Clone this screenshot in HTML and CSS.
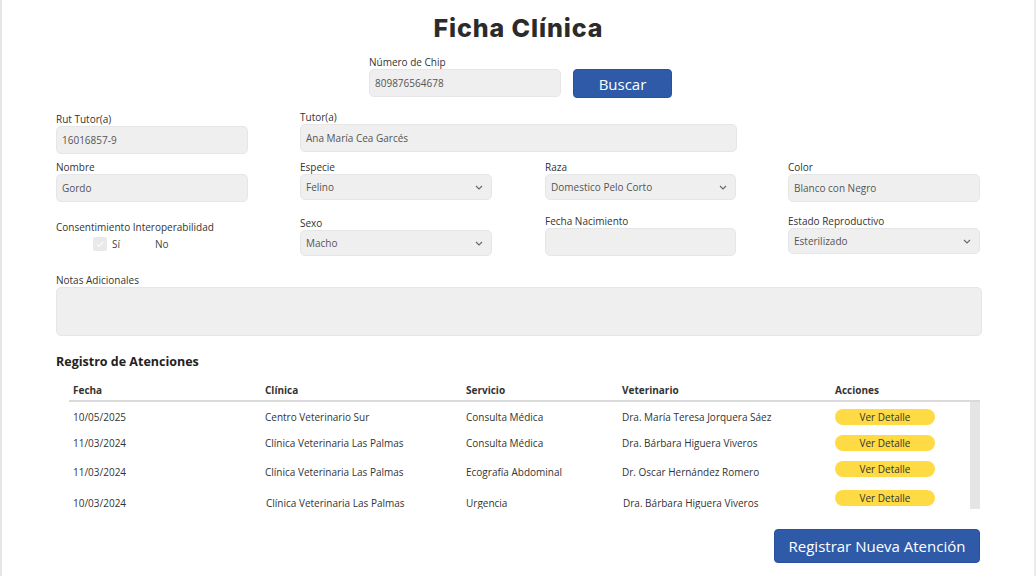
FILE: index.html
```html
<!DOCTYPE html>
<html lang="es">
<head>
<meta charset="utf-8">
<title>Ficha Clínica</title>
<link rel="stylesheet" href="styles.css">
</head>
<body>
<div class="page">
  <h1 class="title">Ficha Clínica</h1>

  <div class="chip-row">
    <div class="field chip-field">
      <div class="label">Número de Chip</div>
      <div class="input">809876564678</div>
    </div>
    <button class="btn-primary btn-buscar">Buscar</button>
  </div>

  <div class="grid row1">
    <div class="field">
      <div class="label">Rut Tutor(a)</div>
      <div class="input">16016857-9</div>
    </div>
    <div class="field span2 up2">
      <div class="label">Tutor(a)</div>
      <div class="input">Ana María Cea Garcés</div>
    </div>
  </div>

  <div class="grid row2">
    <div class="field">
      <div class="label">Nombre</div>
      <div class="input">Gordo</div>
    </div>
    <div class="field">
      <div class="label">Especie</div>
      <div class="input select">Felino<svg class="chev" viewBox="0 0 8 5" width="8" height="5"><polyline points="1,1 4,4 7,1" fill="none" stroke="#666" stroke-width="1.1"/></svg></div>
    </div>
    <div class="field">
      <div class="label">Raza</div>
      <div class="input select">Domestico Pelo Corto<svg class="chev" viewBox="0 0 8 5" width="8" height="5"><polyline points="1,1 4,4 7,1" fill="none" stroke="#666" stroke-width="1.1"/></svg></div>
    </div>
    <div class="field">
      <div class="label">Color</div>
      <div class="input">Blanco con Negro</div>
    </div>
  </div>

  <div class="grid row3">
    <div class="field consent">
      <div class="label">Consentimiento Interoperabilidad</div>
      <div class="checks">
        <span class="checkbox"><svg viewBox="0 0 14 14" width="14" height="14"><polyline points="4,7.5 6.2,9.5 10,5" fill="none" stroke="#fafafa" stroke-width="1.2"/></svg></span>
        <span class="opt">Sí</span>
        <span class="opt no">No</span>
      </div>
    </div>
    <div class="field down2">
      <div class="label">Sexo</div>
      <div class="input select">Macho<svg class="chev" viewBox="0 0 8 5" width="8" height="5"><polyline points="1,1 4,4 7,1" fill="none" stroke="#666" stroke-width="1.1"/></svg></div>
    </div>
    <div class="field">
      <div class="label">Fecha Nacimiento</div>
      <div class="input"></div>
    </div>
    <div class="field">
      <div class="label">Estado Reproductivo</div>
      <div class="input select">Esterilizado<svg class="chev" viewBox="0 0 8 5" width="8" height="5"><polyline points="1,1 4,4 7,1" fill="none" stroke="#666" stroke-width="1.1"/></svg></div>
    </div>
  </div>

  <div class="field notes">
    <div class="label">Notas Adicionales</div>
    <div class="input textarea"></div>
  </div>

  <h2 class="section">Registro de Atenciones</h2>

  <div class="table">
    <div class="thead">
      <span>Fecha</span><span>Clínica</span><span>Servicio</span><span>Veterinario</span><span>Acciones</span>
    </div>
    <div class="tbody">
      <div class="rows">
        <div class="tr"><span>10/05/2025</span><span>Centro Veterinario Sur</span><span>Consulta Médica</span><span>Dra. María Teresa Jorquera Sáez</span><span><button class="btn-detail">Ver Detalle</button></span></div>
        <div class="tr"><span>11/03/2024</span><span>Clínica Veterinaria Las Palmas</span><span>Consulta Médica</span><span>Dra. Bárbara Higuera Viveros</span><span><button class="btn-detail">Ver Detalle</button></span></div>
        <div class="tr"><span>11/03/2024</span><span>Clínica Veterinaria Las Palmas</span><span>Ecografía Abdominal</span><span>Dr. Oscar Hernández Romero</span><span><button class="btn-detail">Ver Detalle</button></span></div>
        <div class="tr"><span>10/03/2024</span><span>Clínica Veterinaria Las Palmas</span><span>Urgencia</span><span>Dra. Bárbara Higuera Viveros</span><span><button class="btn-detail">Ver Detalle</button></span></div>
      </div>
      <div class="scrollbar"></div>
    </div>
  </div>

  <div class="footer">
    <button class="btn-primary btn-register">Registrar Nueva Atención</button>
  </div>
</div>
</body>
</html>
```

FILE: styles.css
```css
* { box-sizing: border-box; }
html, body { margin: 0; padding: 0; background: #fff; }
.page {
  width: 1036px;
  height: 576px;
  overflow: hidden;
  border-left: 2px solid #e6e6e6;
  border-right: 2px solid #ececec;
  padding: 14px 53px 0 54px;
  font-family: "Open Sans", "Noto Sans", sans-serif;
  color: #333;
}
.title {
  margin: 0;
  text-align: center;
  font-family: Inter, "DejaVu Sans", sans-serif;
  font-weight: 800;
  font-size: 25px;
  line-height: 28px;
  color: #2b2b2b;
  letter-spacing: 0.9px;
}
.label {
  font-size: 10px;
  line-height: 14px;
  color: #333;
  white-space: nowrap;
}
.input {
  height: 28px;
  background: #efefef;
  border: 1px solid #e6e6e6;
  border-radius: 5px;
  font-size: 10px;
  color: #555;
  padding: 0 5px;
  display: flex;
  align-items: center;
  white-space: nowrap;
}
.select {
  height: 26px;
  justify-content: space-between;
  padding-right: 8px;
}
.chev { display: block; }

.chip-row {
  display: flex;
  align-items: flex-end;
  margin-top: 13px;
  margin-left: 313px;
  gap: 12px;
}
.chip-field { width: 192px; }
.btn-primary {
  background: #2e5aa8;
  color: #fff;
  border: 1px solid #2a529c;
  border-radius: 4px;
  font-family: "Open Sans", "Noto Sans", sans-serif;
  cursor: pointer;
}
.btn-buscar {
  width: 99px;
  height: 29px;
  font-size: 15px;
  padding: 0;
  margin-bottom: -1px;
}

.grid {
  display: grid;
  grid-template-columns: 192px 192px 192px 192px;
  column-gap: 52px;
  align-items: start;
}
.grid .field:nth-child(3) { margin-left: 1px; }
.span2 { grid-column: span 2; width: 437px; }
.up2 { margin-top: -2px; }
.down2 { margin-top: 2px; }
.row1 { margin-top: 15px; }
.row2 { margin-top: 6px; }
.row3 { margin-top: 12px; }

.consent { margin-top: 6px; }
.checks {
  display: flex;
  align-items: center;
  margin-top: 3px;
  padding-left: 37px;
  font-size: 10px;
  color: #444;
}
.checkbox {
  width: 14px;
  height: 14px;
  background: #e9e9e9;
  border-radius: 2px;
  display: inline-block;
}
.checkbox svg { display: block; }
.opt { margin-left: 5px; }
.opt.no { margin-left: 35px; }

.notes { margin-top: 17px; width: 926px; }
.textarea { height: 49px; }

.section {
  margin: 17px 0 0 0;
  font-size: 12.5px;
  line-height: 18px;
  font-weight: 700;
  color: #222;
}

.table {
  margin-top: 9px;
  margin-left: 13px;
  width: 911px;
}
.thead, .tr {
  display: grid;
  grid-template-columns: 192px 201px 156px 213px 1fr;
  padding-left: 4px;
  align-items: center;
}
.thead {
  height: 22px;
  font-size: 10px;
  font-weight: 700;
  color: #333;
  border-bottom: 2px solid #dadada;
  width: 911px;
}
.tbody {
  display: flex;
  height: 107px;
  overflow: hidden;
}
.rows { flex: 1; padding-top: 2px; }
.scrollbar { width: 10px; background: #e5e5e5; }
.tr {
  font-size: 10px;
  color: #333;
  white-space: nowrap;
}
.tr:nth-child(1) { height: 26px; }
.tr:nth-child(2) { height: 25px; }
.tr:nth-child(3) { height: 34px; }
.tr:nth-child(3) .btn-detail { margin-top: -6px; }
.tr:nth-child(4) { height: 28px; }
.tr:nth-child(4) .btn-detail { margin-top: -10px; }
.tr:nth-child(4) span:nth-child(2),
.tr:nth-child(4) span:nth-child(4) { padding-left: 1px; }
.btn-detail {
  display: block;
  width: 100px;
  height: 16px;
  border: none;
  border-radius: 8px;
  background: #fedb45;
  font-family: "Open Sans", "Noto Sans", sans-serif;
  font-size: 10px;
  color: #333;
  padding: 0;
}

.footer {
  display: flex;
  justify-content: flex-end;
  margin-top: 20px;
  width: 924px;
}
.btn-register {
  width: 206px;
  height: 34px;
  font-size: 15px;
  padding: 0;
}
```
